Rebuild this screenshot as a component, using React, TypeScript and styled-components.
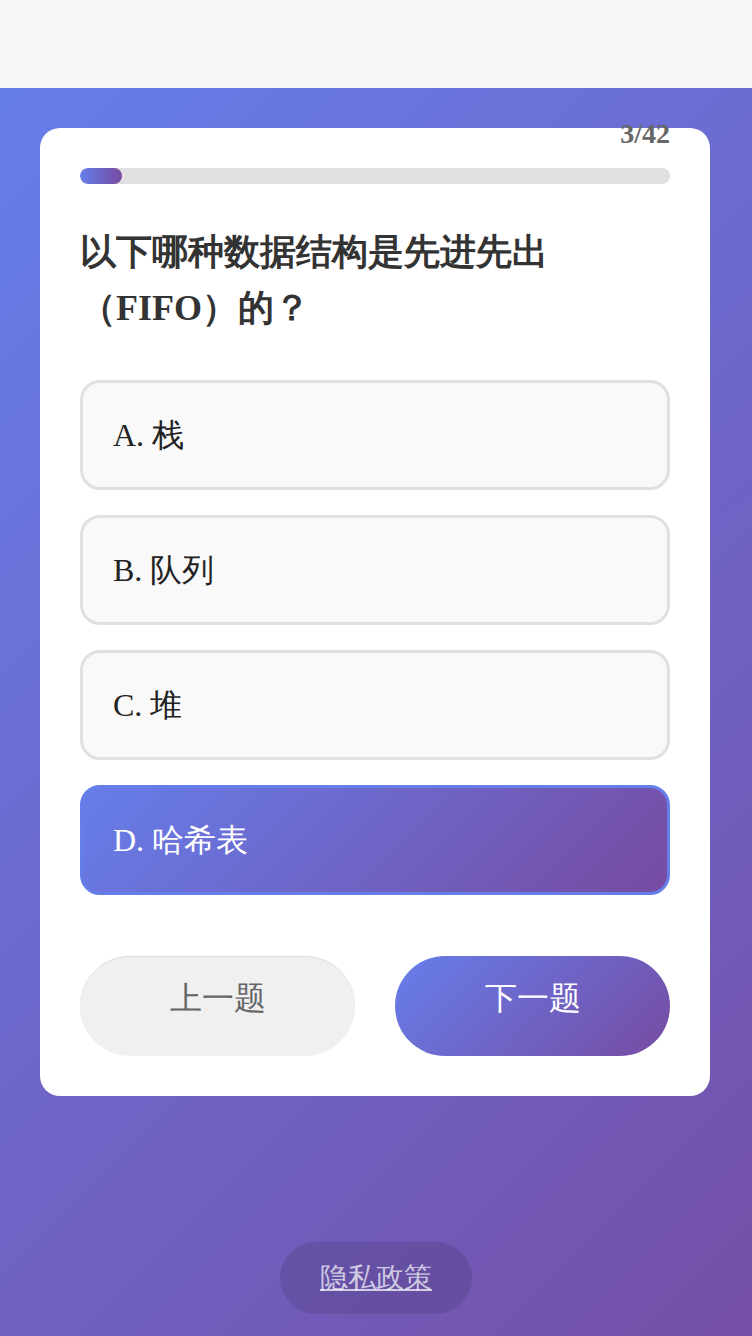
import React, { useState } from "react"
import styled, { createGlobalStyle, css } from "styled-components"

const GlobalStyle = createGlobalStyle`
  body {
    margin: 0;
    font-family: "Liberation Serif", serif;
  }
  * {
    box-sizing: border-box;
  }
  ::-webkit-scrollbar {
    width: 8px;
  }
  ::-webkit-scrollbar-thumb {
    background: #cccccc;
    border-radius: 3px;
  }
`

const TopBar = styled.header`
  height: 88px;
  background: #f8f8f8;
`

const Main = styled.main`
  min-height: 1440px;
  padding: 40px;
  background: linear-gradient(135deg, #667eea 0%, #764ba2 100%);
`

const Card = styled.section`
  width: 670px;
  padding: 40px;
  background: #ffffff;
  border-radius: 20px;
`

const ProgressWrap = styled.div`
  position: relative;
`

const Counter = styled.span`
  position: absolute;
  right: 0;
  bottom: calc(100% + 20px);
  font-size: 28px;
  line-height: 1;
  font-weight: bold;
  color: #666666;
`

const ProgressTrack = styled.div`
  height: 16px;
  border-radius: 8px;
  background: #e0e0e0;
  overflow: hidden;
`

const ProgressFill = styled.div`
  height: 100%;
  border-radius: 8px;
  background: linear-gradient(90deg, #667eea 0%, #764ba2 100%);
`

const Question = styled.h2`
  margin: 40px 0 44px;
  font-size: 36px;
  line-height: 56px;
  font-weight: bold;
  color: #333333;
`

const Options = styled.div`
  display: flex;
  flex-direction: column;
  gap: 25px;
`

const Option = styled.div<{ $selected: boolean }>`
  height: 110px;
  display: flex;
  align-items: center;
  padding: 0 30px;
  border: 3px solid #e0e0e0;
  border-radius: 20px;
  background: #f9f9f9;
  font-size: 32px;
  line-height: 44px;
  color: #222222;
  cursor: pointer;

  ${({ $selected }) => $selected && css`
    border-color: #667eea;
    background: linear-gradient(135deg, #667eea 0%, #764ba2 100%);
    color: #ffffff;
  `}
`

const Actions = styled.div`
  display: flex;
  gap: 40px;
  margin-top: 61px;
`

const NavButton = styled.button<{ $primary?: boolean }>`
  flex: 1;
  height: 100px;
  padding: 20px 0 36px;
  border: none;
  border-radius: 50px;
  font-family: inherit;
  font-size: 32px;
  line-height: 44px;
  background: #f0f0f0;
  color: #666666;
  box-shadow: inset 0 1px 0 #dddddd;
  cursor: pointer;

  ${({ $primary }) => $primary && css`
    background: linear-gradient(135deg, #667eea 0%, #764ba2 100%);
    color: #ffffff;
    box-shadow: none;
  `}
`

const Footer = styled.footer`
  display: flex;
  justify-content: center;
  margin-top: 146px;
`

const PrivacyLink = styled.a`
  padding: 16px 40px;
  border-radius: 36px;
  background: rgba(0, 0, 0, 0.1);
  font-size: 28px;
  line-height: 40px;
  color: rgba(255, 255, 255, 0.7);
  text-decoration: underline;
  cursor: pointer;
`

const options = ["A. 栈", "B. 队列", "C. 堆", "D. 哈希表"]

export default function App() {
  const [selected, setSelected] = useState(3)
  const current = 3
  const total = 42

  return (
    <>
      <GlobalStyle />
      <TopBar />
      <Main>
        <Card>
          <ProgressWrap>
            <Counter>{current}/{total}</Counter>
            <ProgressTrack>
              <ProgressFill style={{ width: `${(current / total) * 100}%` }} />
            </ProgressTrack>
          </ProgressWrap>
          <Question>以下哪种数据结构是先进先出（FIFO）的？</Question>
          <Options>
            {options.map((label, i) => (
              <Option key={label} $selected={selected === i} onClick={() => setSelected(i)}>
                {label}
              </Option>
            ))}
          </Options>
          <Actions>
            <NavButton>上一题</NavButton>
            <NavButton $primary>下一题</NavButton>
          </Actions>
        </Card>
        <Footer>
          <PrivacyLink>隐私政策</PrivacyLink>
        </Footer>
      </Main>
    </>
  )
}
